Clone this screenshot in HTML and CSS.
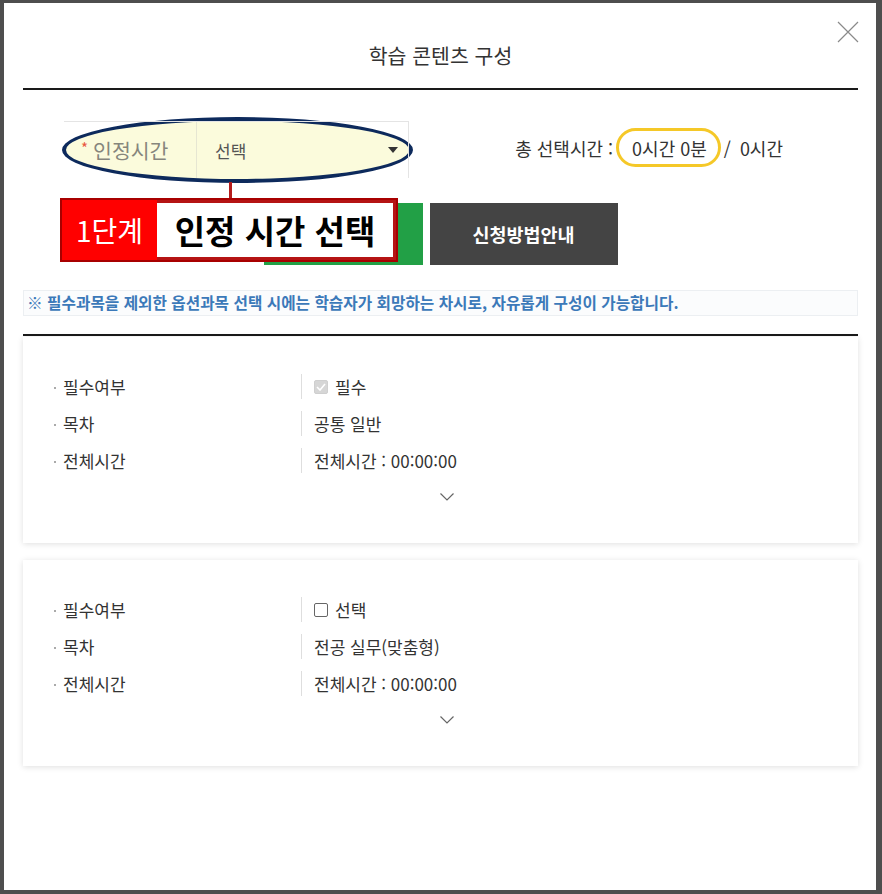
FILE: index.html
```html
<!DOCTYPE html>
<html lang="ko">
<head>
<meta charset="utf-8">
<title>학습 콘텐츠 구성</title>
<link rel="stylesheet" href="styles.css">
</head>
<body>
<div class="modal">
  <header class="modal-head">
    <h1 class="modal-title">학습 콘텐츠 구성</h1>
  </header>
  <button class="close" aria-label="닫기">
    <svg width="22" height="22" viewBox="0 0 22 22"><path d="M1 1 L21 21 M21 1 L1 21" stroke="#8a8a8a" stroke-width="1.2" fill="none"/></svg>
  </button>

  <section class="time-row">
    <div class="sel-table">
      <div class="sel-label"><span class="req">*</span>인정시간</div>
      <div class="sel-box"><span>선택</span><span class="caret"></span></div>
    </div>
    <div class="total">
      <span>총 선택시간 :</span>
      <span class="pill">0시간 0분</span>
      <span class="slash">/</span>
      <span class="max">0시간</span>
    </div>
  </section>

  <div class="btn-row">
    <button class="btn btn-green"></button>
    <button class="btn btn-dark">신청방법안내</button>
  </div>

  <p class="notice">※ 필수과목을 제외한 옵션과목 선택 시에는 학습자가 회망하는 차시로, 자유롭게 구성이 가능합니다.</p>

  <div class="cards">
    <div class="card">
      <div class="rows">
        <div class="row"><span class="label">필수여부</span><span class="value"><span class="chk chk-on"><svg width="10" height="8" viewBox="0 0 10 8"><path d="M1 4 L4 7 L9 1" stroke="#fff" stroke-width="1.6" fill="none"/></svg></span>필수</span></div>
        <div class="row"><span class="label">목차</span><span class="value">공통 일반</span></div>
        <div class="row"><span class="label">전체시간</span><span class="value">전체시간 : 00:00:00</span></div>
      </div>
      <div class="more"><svg width="14" height="8" viewBox="0 0 14 8"><path d="M0.5 0.5 L7 7 L13.5 0.5" stroke="#666" stroke-width="1.2" fill="none"/></svg></div>
    </div>
    <div class="card">
      <div class="rows">
        <div class="row"><span class="label">필수여부</span><span class="value"><span class="chk"></span>선택</span></div>
        <div class="row"><span class="label">목차</span><span class="value">전공 실무(맞춤형)</span></div>
        <div class="row"><span class="label">전체시간</span><span class="value">전체시간 : 00:00:00</span></div>
      </div>
      <div class="more"><svg width="14" height="8" viewBox="0 0 14 8"><path d="M0.5 0.5 L7 7 L13.5 0.5" stroke="#666" stroke-width="1.2" fill="none"/></svg></div>
    </div>
  </div>

  <div class="anno-ellipse"></div>
  <div class="anno-line"></div>
  <div class="anno-box"><span class="anno-step">1단계</span><span class="anno-text">인정 시간 선택</span></div>
</div>
</body>
</html>
```

FILE: styles.css
```css
* { box-sizing: border-box; }
html, body { margin: 0; padding: 0; }
body {
  background: #4e4e4e;
  width: 882px;
  height: 894px;
  overflow: hidden;
  font-family: "Noto Sans CJK KR", "Noto Sans", sans-serif;
  color: #333;
}
.modal {
  position: relative;
  margin: 3px 0 0 4px;
  width: 872px;
  height: 887px;
  background: #fff;
  padding: 0 18px 0 19px;
}
.modal-head {
  height: 87px;
  padding-top: 19px;
  border-bottom: 2px solid #1a1a1a;
  display: flex;
  justify-content: center;
  align-items: center;
}
.modal-title {
  margin: 0;
  font-size: 20.5px;
  font-weight: 400;
  line-height: 1;
  color: #333;
}
.close {
  position: absolute;
  left: 833px;
  top: 18px;
  width: 22px;
  height: 22px;
  padding: 0;
  border: 0;
  background: none;
}
.close svg { display: block; }

.time-row {
  position: relative;
  z-index: 1;
  margin-top: 31px;
  height: 57px;
  padding-left: 41px;
  display: flex;
  align-items: center;
}
.sel-table {
  display: flex;
  height: 57px;
  border-top: 1px solid #e4e4e4;
  border-right: 1px solid #e4e4e4;
}
.sel-label {
  width: 133px;
  padding-left: 17px;
  display: flex;
  align-items: center;
  font-size: 20.5px;
  color: #86867c;
  border-right: 1px solid #e6e6d2;
}
.req {
  color: #e8573f;
  font-size: 15px;
  margin-right: 5px;
  position: relative;
  top: -3px;
}
.sel-box {
  width: 211px;
  padding: 0 10px 0 18px;
  display: flex;
  align-items: center;
  justify-content: space-between;
  font-size: 17px;
  color: #555;
}
.caret {
  width: 0;
  height: 0;
  border-left: 5.5px solid transparent;
  border-right: 5.5px solid transparent;
  border-top: 6px solid #333;
}
.total {
  margin-left: auto;
  margin-right: 75px;
  display: flex;
  align-items: center;
  font-size: 18px;
  color: #333;
  position: relative;
  top: -2px;
}
.pill {
  margin-left: 3px;
  height: 39px;
  padding: 0 11px 0 13px;
  border: 3px solid #f5c828;
  border-radius: 20px;
  display: flex;
  align-items: center;
}
.slash { margin-left: 3px; }
.max { margin-left: 9px; }

.btn-row {
  margin-top: 25px;
  display: flex;
  justify-content: center;
  gap: 7px;
}
.btn {
  height: 62px;
  border: 0;
  padding: 0;
  font-family: inherit;
}
.btn-green { width: 159px; background: #22a046; }
.btn-dark {
  width: 188px;
  background: #444;
  color: #fff;
  font-size: 18.5px;
  font-weight: 700;
}

.notice {
  margin: 25px 0 0;
  height: 26px;
  padding-left: 3px;
  border: 1px solid #eceff2;
  background: #fbfcfd;
  font-size: 15.7px;
  font-weight: 700;
  line-height: 24px;
  color: #3b79b9;
  white-space: nowrap;
}

.cards {
  margin-top: 18px;
  border-top: 2px solid #1a1a1a;
  padding-top: 1px;
  display: flex;
  flex-direction: column;
  gap: 17px;
}
.card {
  height: 206px;
  padding: 37px 0 0 31px;
  background: #fff;
  box-shadow: 0 1px 6px rgba(0, 0, 0, 0.13);
}
.rows {
  display: flex;
  flex-direction: column;
  gap: 12px;
}
.row {
  display: flex;
  align-items: center;
  height: 25px;
  font-size: 17px;
  color: #333;
}
.label {
  position: relative;
  width: 247px;
  padding-left: 9px;
}
.label::before {
  content: "";
  position: absolute;
  left: 0;
  top: 50%;
  width: 2px;
  height: 2px;
  background: #aaa;
}
.value {
  height: 25px;
  display: flex;
  align-items: center;
  border-left: 1px solid #dedede;
  padding-left: 12px;
}
.chk {
  width: 14px;
  height: 14px;
  margin-right: 7px;
  border: 1px solid #666;
  border-radius: 2px;
  background: #fff;
  display: flex;
  align-items: center;
  justify-content: center;
}
.chk-on {
  border-color: #cfcfcf;
  background: #d6d6d6;
}
.more {
  margin-top: 20px;
  padding-left: 386px;
  height: 8px;
}
.more svg { display: block; }

.anno-ellipse {
  position: absolute;
  z-index: 0;
  left: 58px;
  top: 114px;
  width: 351px;
  height: 66px;
  border: 4px solid #0d2a5c;
  border-radius: 50%;
  background: #fbfbdc;
}
.anno-line {
  position: absolute;
  z-index: 2;
  left: 225px;
  top: 179px;
  width: 3px;
  height: 17px;
  background: #b51c1c;
}
.anno-box {
  position: absolute;
  z-index: 2;
  left: 56px;
  top: 195px;
  width: 338px;
  height: 64px;
  display: flex;
  border: 2px solid #a80000;
}
.anno-step {
  width: 95px;
  background: #ff0000;
  color: #fff;
  font-size: 28px;
  display: flex;
  align-items: center;
  justify-content: center;
}
.anno-text {
  flex: 1;
  background: #fff;
  border: 3px solid #b51414;
  border-left: 0;
  color: #000;
  font-size: 33px;
  font-weight: 700;
  display: flex;
  align-items: center;
  justify-content: center;
}
```
